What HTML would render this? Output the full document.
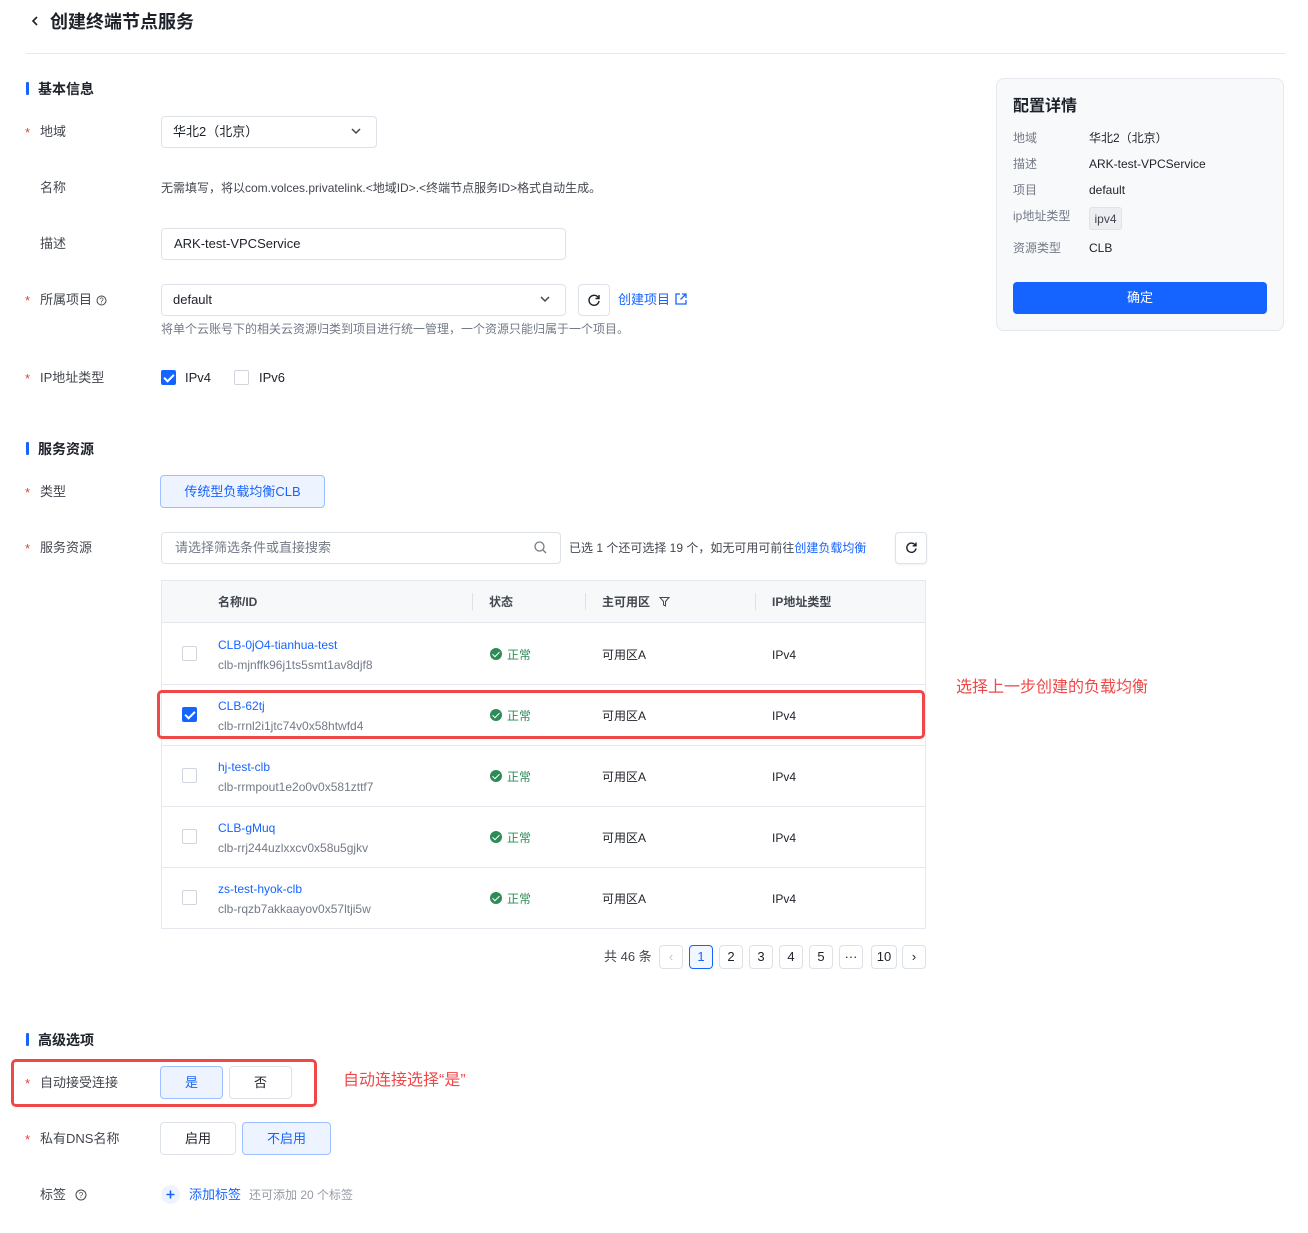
<!DOCTYPE html>
<html><head><meta charset="utf-8"><style>
*{margin:0;padding:0;box-sizing:border-box}
body{width:1308px;height:1233px;background:#fff;position:relative;overflow:hidden;font-family:"Liberation Sans","Noto Sans CJK SC",sans-serif;font-size:13px;color:#1d2129}
.a{position:absolute;white-space:nowrap;line-height:20px;margin-top:1px}
.lbl{color:#42464e}
.req{color:#e63f3f;position:absolute;font-size:13px;line-height:20px;margin-top:1px}
.box{position:absolute;border:1px solid #dde2e9;border-radius:4px;background:#fff}
.sec{position:absolute;left:26px;width:3px;height:13px;background:#1664ff;border-radius:1px}
.st{font-weight:bold;font-size:14px}
.blue{color:#1664ff}
.gray{color:#737a87}
.cb{position:absolute;width:15px;height:15px;border:1px solid #d0d5dd;border-radius:2px;background:#fff}
.cbc{position:absolute;width:15px;height:15px;border-radius:2px;background:#1664ff}
.cbc:after{content:"";position:absolute;left:5px;top:2px;width:4px;height:8px;border:solid #fff;border-width:0 2px 2px 0;transform:rotate(45deg)}
.ok{position:absolute;width:12px;height:12px;border-radius:50%;background:#2e8b57}
.ok:after{content:"";position:absolute;left:4px;top:2px;width:3px;height:6px;border:solid #fff;border-width:0 1.5px 1.5px 0;transform:rotate(45deg)}
.pg{position:absolute;top:945px;width:24px;height:24px;border:1px solid #dde2e9;border-radius:4px;text-align:center;line-height:22px;font-size:13px}
.btn{position:absolute;border:1px solid #dde2e9;border-radius:4px;text-align:center;line-height:30px}
.sel{background:#eef4ff;border-color:#9cbfff;color:#1664ff}
</style></head><body>

<svg style="position:absolute;left:31px;top:15px" width="8" height="12"><path d="M6 2L2 6l4 4" stroke="#1d2129" stroke-width="1.6" fill="none"/></svg>
<div class="a" style="left:50px;top:9px;font-size:18px;font-weight:bold;line-height:24px">创建终端节点服务</div>
<div style="position:absolute;left:26px;top:53px;width:1259px;height:1px;background:#e5e8ef"></div>

<div class="sec" style="top:82px"></div>
<div class="a st" style="left:38px;top:78px">基本信息</div>

<div class="req" style="left:25px;top:122px">*</div>
<div class="a lbl" style="left:40px;top:121px">地域</div>
<div class="box" style="left:161px;top:116px;width:216px;height:32px"></div>
<div class="a" style="left:173px;top:121px">华北2（北京）</div>
<svg style="position:absolute;left:351px;top:127px" width="10" height="8"><path d="M1 2l4 4 4-4" stroke="#42464e" stroke-width="1.5" fill="none"/></svg>

<div class="a lbl" style="left:40px;top:177px">名称</div>
<div class="a" style="left:161px;top:177px;font-size:12px;color:#42464e">无需填写，将以com.volces.privatelink.&lt;地域ID&gt;.&lt;终端节点服务ID&gt;格式自动生成。</div>

<div class="a lbl" style="left:40px;top:233px">描述</div>
<div class="box" style="left:161px;top:228px;width:405px;height:32px"></div>
<div class="a" style="left:174px;top:233px">ARK-test-VPCService</div>

<div class="req" style="left:25px;top:290px">*</div>
<div class="a lbl" style="left:40px;top:289px">所属项目</div>
<svg style="position:absolute;left:96px;top:295px" width="11" height="11"><circle cx="5.5" cy="5.5" r="4.5" stroke="#42464e" fill="none"/><text x="5.5" y="8.5" font-size="8" text-anchor="middle" fill="#42464e" font-family="Liberation Sans">?</text></svg>
<div class="box" style="left:161px;top:284px;width:405px;height:32px"></div>
<div class="a" style="left:173px;top:289px">default</div>
<svg style="position:absolute;left:540px;top:295px" width="10" height="8"><path d="M1 2l4 4 4-4" stroke="#42464e" stroke-width="1.5" fill="none"/></svg>
<div class="box" style="left:578px;top:284px;width:32px;height:32px"></div>
<svg style="position:absolute;left:587px;top:293px" width="14" height="14"><path d="M11.5 5A5 5 0 1 0 12 8" stroke="#1d2129" stroke-width="1.4" fill="none"/><path d="M12 2v3.5H8.5" stroke="#1d2129" stroke-width="1.4" fill="none"/></svg>
<div class="a blue" style="left:618px;top:289px">创建项目</div>
<svg style="position:absolute;left:675px;top:293px" width="12" height="12"><path d="M5 1H1v10h10V7M7 1h4v4M11 1L5.5 6.5" stroke="#1664ff" stroke-width="1.3" fill="none"/></svg>
<div class="a" style="left:161px;top:318px;font-size:12px;color:#737a87">将单个云账号下的相关云资源归类到项目进行统一管理，一个资源只能归属于一个项目。</div>

<div class="req" style="left:25px;top:368px">*</div>
<div class="a lbl" style="left:40px;top:367px">IP地址类型</div>
<div class="cbc" style="left:161px;top:370px"></div>
<div class="a" style="left:185px;top:367px">IPv4</div>
<div class="cb" style="left:234px;top:370px"></div>
<div class="a" style="left:259px;top:367px">IPv6</div>

<div class="sec" style="top:442px"></div>
<div class="a st" style="left:38px;top:438px">服务资源</div>

<div class="req" style="left:25px;top:482px">*</div>
<div class="a lbl" style="left:40px;top:481px">类型</div>
<div class="btn sel" style="left:160px;top:475px;width:165px;height:33px;padding-top:1px">传统型负载均衡CLB</div>

<div class="req" style="left:25px;top:538px">*</div>
<div class="a lbl" style="left:40px;top:537px">服务资源</div>
<div class="box" style="left:161px;top:532px;width:400px;height:32px"></div>
<div class="a" style="left:175px;top:537px;color:#737a87">请选择筛选条件或直接搜索</div>
<svg style="position:absolute;left:534px;top:541px" width="13" height="13"><circle cx="5.5" cy="5.5" r="4.5" stroke="#737a87" stroke-width="1.3" fill="none"/><path d="M9 9l3 3" stroke="#737a87" stroke-width="1.3"/></svg>
<div class="a" style="left:569px;top:537px;font-size:12px;color:#42464e">已选 1 个还可选择 19 个，如无可用可前往<span class="blue">创建负载均衡</span></div>
<div class="box" style="left:895px;top:532px;width:32px;height:32px;box-shadow:0 1px 2px rgba(0,0,0,.06)"></div>
<svg style="position:absolute;left:905px;top:541px" width="13" height="13"><path d="M10.5 4.5A4.6 4.6 0 1 0 11 7.5" stroke="#1d2129" stroke-width="1.4" fill="none"/><path d="M11 1.5v3.3H7.7" stroke="#1d2129" stroke-width="1.4" fill="none"/></svg>

<div style="position:absolute;left:161px;top:580px;width:765px;height:349px;border:1px solid #e5e8ef"></div>
<div style="position:absolute;left:162px;top:581px;width:763px;height:42px;background:#f6f8fa;border-bottom:1px solid #e5e8ef"></div>
<div style="position:absolute;left:472px;top:593px;width:1px;height:17px;background:#dde2e9"></div>
<div style="position:absolute;left:585px;top:593px;width:1px;height:17px;background:#dde2e9"></div>
<div style="position:absolute;left:755px;top:593px;width:1px;height:17px;background:#dde2e9"></div>
<div class="a" style="left:218px;top:591px;font-weight:bold;color:#42464e;font-size:12px">名称/ID</div>
<div class="a" style="left:489px;top:591px;font-weight:bold;color:#42464e;font-size:12px">状态</div>
<div class="a" style="left:602px;top:591px;font-weight:bold;color:#42464e;font-size:12px">主可用区</div>
<svg style="position:absolute;left:659px;top:596px" width="11" height="11"><path d="M1 1.5h9L6.5 5.5V10L4.5 9V5.5z" stroke="#42464e" stroke-width="1" fill="none"/></svg>
<div class="a" style="left:772px;top:591px;font-weight:bold;color:#42464e;font-size:12px">IP地址类型</div>

<div style="position:absolute;left:162px;top:684px;width:763px;height:1px;background:#e5e8ef"></div>
<div style="position:absolute;left:162px;top:745px;width:763px;height:1px;background:#e5e8ef"></div>
<div style="position:absolute;left:162px;top:806px;width:763px;height:1px;background:#e5e8ef"></div>
<div style="position:absolute;left:162px;top:867px;width:763px;height:1px;background:#e5e8ef"></div>

<div class="cb" style="left:182px;top:646px"></div>
<div class="a blue" style="left:218px;top:634px;font-size:12px">CLB-0jO4-tianhua-test</div>
<div class="a" style="left:218px;top:654px;font-size:12px;color:#737a87">clb-mjnffk96j1ts5smt1av8djf8</div>
<div class="ok" style="left:490px;top:648px"></div><div class="a" style="left:507px;top:644px;font-size:12px;color:#2e8b57">正常</div>
<div class="a" style="left:602px;top:644px;font-size:12px">可用区A</div><div class="a" style="left:772px;top:644px;font-size:12px">IPv4</div>

<div class="cbc" style="left:182px;top:707px"></div>
<div class="a blue" style="left:218px;top:695px;font-size:12px">CLB-62tj</div>
<div class="a" style="left:218px;top:715px;font-size:12px;color:#737a87">clb-rrnl2i1jtc74v0x58htwfd4</div>
<div class="ok" style="left:490px;top:709px"></div><div class="a" style="left:507px;top:705px;font-size:12px;color:#2e8b57">正常</div>
<div class="a" style="left:602px;top:705px;font-size:12px">可用区A</div><div class="a" style="left:772px;top:705px;font-size:12px">IPv4</div>

<div class="cb" style="left:182px;top:768px"></div>
<div class="a blue" style="left:218px;top:756px;font-size:12px">hj-test-clb</div>
<div class="a" style="left:218px;top:776px;font-size:12px;color:#737a87">clb-rrmpout1e2o0v0x581zttf7</div>
<div class="ok" style="left:490px;top:770px"></div><div class="a" style="left:507px;top:766px;font-size:12px;color:#2e8b57">正常</div>
<div class="a" style="left:602px;top:766px;font-size:12px">可用区A</div><div class="a" style="left:772px;top:766px;font-size:12px">IPv4</div>

<div class="cb" style="left:182px;top:829px"></div>
<div class="a blue" style="left:218px;top:817px;font-size:12px">CLB-gMuq</div>
<div class="a" style="left:218px;top:837px;font-size:12px;color:#737a87">clb-rrj244uzlxxcv0x58u5gjkv</div>
<div class="ok" style="left:490px;top:831px"></div><div class="a" style="left:507px;top:827px;font-size:12px;color:#2e8b57">正常</div>
<div class="a" style="left:602px;top:827px;font-size:12px">可用区A</div><div class="a" style="left:772px;top:827px;font-size:12px">IPv4</div>

<div class="cb" style="left:182px;top:890px"></div>
<div class="a blue" style="left:218px;top:878px;font-size:12px">zs-test-hyok-clb</div>
<div class="a" style="left:218px;top:898px;font-size:12px;color:#737a87">clb-rqzb7akkaayov0x57ltji5w</div>
<div class="ok" style="left:490px;top:892px"></div><div class="a" style="left:507px;top:888px;font-size:12px;color:#2e8b57">正常</div>
<div class="a" style="left:602px;top:888px;font-size:12px">可用区A</div><div class="a" style="left:772px;top:888px;font-size:12px">IPv4</div>

<div style="position:absolute;left:157px;top:690px;width:768px;height:49px;border:3px solid #f04848;border-radius:5px"></div>
<div class="a" style="left:956px;top:677px;font-size:16px;color:#f04848">选择上一步创建的负载均衡</div>

<div class="a" style="left:604px;top:946px;color:#42464e">共 46 条</div>
<div class="pg" style="left:659px;color:#c0c4cc">‹</div>
<div class="pg" style="left:689px;border-color:#1664ff;color:#1664ff;background:#f2f6ff">1</div>
<div class="pg" style="left:719px">2</div>
<div class="pg" style="left:749px">3</div>
<div class="pg" style="left:779px">4</div>
<div class="pg" style="left:809px">5</div>
<div class="pg" style="left:839px">···</div>
<div class="pg" style="left:871px;width:26px">10</div>
<div class="pg" style="left:902px">›</div>

<div class="sec" style="top:1033px"></div>
<div class="a st" style="left:38px;top:1029px">高级选项</div>

<div class="req" style="left:25px;top:1073px">*</div>
<div class="a lbl" style="left:40px;top:1072px">自动接受连接</div>
<div class="btn sel" style="left:160px;top:1066px;width:63px;height:33px;padding-top:1px">是</div>
<div class="btn" style="left:229px;top:1066px;width:63px;height:33px;padding-top:1px">否</div>
<div style="position:absolute;left:11px;top:1059px;width:306px;height:48px;border:3px solid #f04848;border-radius:5px"></div>
<div class="a" style="left:343px;top:1070px;font-size:16px;color:#f04848">自动连接选择“是”</div>

<div class="req" style="left:25px;top:1129px">*</div>
<div class="a lbl" style="left:40px;top:1128px">私有DNS名称</div>
<div class="btn" style="left:160px;top:1122px;width:76px;height:33px;padding-top:1px">启用</div>
<div class="btn sel" style="left:242px;top:1122px;width:89px;height:33px;padding-top:1px">不启用</div>

<div class="a lbl" style="left:40px;top:1184px">标签</div>
<svg style="position:absolute;left:75px;top:1189px" width="12" height="12"><circle cx="6" cy="6" r="5" stroke="#42464e" fill="none"/><text x="6" y="9" font-size="8" text-anchor="middle" fill="#42464e" font-family="Liberation Sans">?</text></svg>
<div style="position:absolute;left:161px;top:1185px;width:19px;height:19px;border-radius:50%;background:#eef3ff"></div>
<svg style="position:absolute;left:165px;top:1189px" width="11" height="11"><path d="M5.5 1.5v8M1.5 5.5h8" stroke="#1664ff" stroke-width="1.6"/></svg>
<div class="a blue" style="left:189px;top:1184px">添加标签</div>
<div class="a" style="left:249px;top:1184px;font-size:12px;color:#969ba4">还可添加 20 个标签</div>

<div style="position:absolute;left:996px;top:78px;width:288px;height:253px;background:#f8f9fb;border:1px solid #e5e8ef;border-radius:8px"></div>
<div class="a" style="left:1013px;top:95px;font-size:16px;font-weight:bold;line-height:22px">配置详情</div>
<div class="a" style="left:1013px;top:127px;font-size:12px;color:#737a87">地域</div>
<div class="a" style="left:1089px;top:127px;font-size:12px">华北2（北京）</div>
<div class="a" style="left:1013px;top:153px;font-size:12px;color:#737a87">描述</div>
<div class="a" style="left:1089px;top:153px;font-size:12px">ARK-test-VPCService</div>
<div class="a" style="left:1013px;top:179px;font-size:12px;color:#737a87">项目</div>
<div class="a" style="left:1089px;top:179px;font-size:12px">default</div>
<div class="a" style="left:1013px;top:205px;font-size:12px;color:#737a87">ip地址类型</div>
<div style="position:absolute;left:1089px;top:207px;width:33px;height:23px;background:#eceef2;border:1px solid #e0e3e8;border-radius:3px;text-align:center;line-height:22px;font-size:12px;color:#42464e">ipv4</div>
<div class="a" style="left:1013px;top:237px;font-size:12px;color:#737a87">资源类型</div>
<div class="a" style="left:1089px;top:237px;font-size:12px">CLB</div>
<div style="position:absolute;left:1013px;top:282px;width:254px;height:32px;background:#1664ff;border-radius:4px;color:#fff;text-align:center;line-height:32px;font-size:13px">确定</div>

</body></html>
